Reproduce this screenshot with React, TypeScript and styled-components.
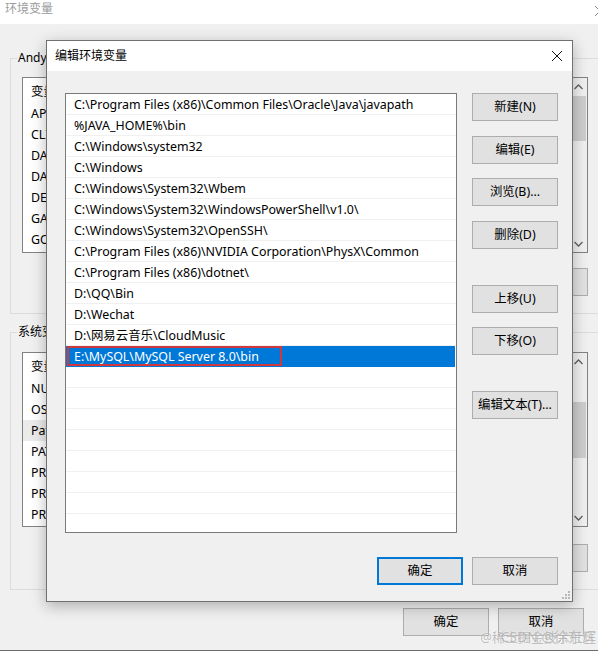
import React from "react";
import styled, { createGlobalStyle } from "styled-components";

const FONT = `"Noto Sans", "Noto Sans CJK SC", sans-serif`;

const Global = createGlobalStyle`
  html, body { margin: 0; padding: 0; width: 598px; height: 652px; overflow: hidden; background: #fff; }
  body { font-family: ${FONT}; font-size: 12px; color: #000; }
  * { box-sizing: border-box; }
`;

const Screen = styled.div`
  position: relative;
  width: 598px;
  height: 652px;
  overflow: hidden;
  background: #fff;
`;

/* ---------- background window: 环境变量 ---------- */
const Window = styled.div`
  width: 612px;
  height: 651px;
  background: #f0f0f0;
  border-bottom: 1px solid #6a6a6a;
  display: flex;
  flex-direction: column;
`;

const WinTitleBar = styled.div`
  height: 24px;
  flex: none;
  background: #fff;
  display: flex;
  justify-content: space-between;
  align-items: flex-start;
  padding: 1px 0 0 5px;
`;

const WinTitle = styled.span`
  color: #9c9c9c;
  font-size: 12px;
  line-height: 16px;
`;

const WinClose = styled.svg`
  margin: 5px 7px 0 0;
`;

const WinBody = styled.div`
  flex: 1;
  display: flex;
  flex-direction: column;
  padding: 26px 12px 0 10px;
`;

const GroupBox = styled.fieldset<{ $mt?: number }>`
  margin: ${(p) => p.$mt ?? 0}px 0 0 0;
  padding: 0 11px 17px 11px;
  border: 1px solid #dcdcdc;
  min-width: 0;
  display: flex;
  flex-direction: column;
`;

const GroupLegend = styled.legend`
  margin-left: -5px;
  padding: 0 1px;
  font-size: 12px;
  line-height: 16px;
  color: #000;
`;

const BgList = styled.div<{ $h: number; $mt: number }>`
  height: ${(p) => p.$h}px;
  margin-top: ${(p) => p.$mt}px;
  border: 1px solid #828282;
  background: #fff;
  display: flex;
  overflow: hidden;
`;

const BgTable = styled.div`
  flex: 1;
  display: flex;
  flex-direction: column;
  overflow: hidden;
`;

const BgHeader = styled.div`
  height: 25px;
  flex: none;
  display: flex;
  align-items: center;
  padding-left: 8px;
  font-size: 12.4px;
`;

const BgRow = styled.div<{ $sel?: boolean }>`
  height: 21px;
  flex: none;
  display: flex;
  align-items: center;
  padding-left: 8px;
  background: ${(p) => (p.$sel ? "#ebebeb" : "#fff")};
  white-space: nowrap;
  font-size: 12.4px;
`;

const Scrollbar = styled.div`
  width: 17px;
  flex: none;
  background: #f0f0f0;
  display: flex;
  flex-direction: column;
`;

const ScrollArrow = styled.div`
  height: 17px;
  flex: none;
  display: flex;
  align-items: center;
  justify-content: center;
`;

const ScrollTrack = styled.div`
  flex: 1;
  display: flex;
  flex-direction: column;
  align-items: center;
`;

const ScrollThumb = styled.div<{ $top: number; $h: number }>`
  width: 15px;
  margin-top: ${(p) => p.$top}px;
  height: ${(p) => p.$h}px;
  background: #cdcdcd;
`;

const BgButtonRow = styled.div<{ $mt: number }>`
  margin-top: ${(p) => p.$mt}px;
  display: flex;
  justify-content: flex-end;
  gap: 9px;
`;

const Footer = styled.div`
  margin-top: 18px;
  padding-right: 16px;
  display: flex;
  justify-content: flex-end;
  gap: 9px;
`;

const Btn = styled.button<{ $primary?: boolean; $mt?: number }>`
  width: 86px;
  height: 28px;
  flex: none;
  margin: ${(p) => p.$mt ?? 0}px 0 0 0;
  padding: 0;
  background: #e1e1e1;
  border: ${(p) => (p.$primary ? "2px solid #0078d7" : "1px solid #adadad")};
  font-family: ${FONT};
  font-size: 12.4px;
  color: #000;
  line-height: 16px;
`;

/* ---------- foreground dialog: 编辑环境变量 ---------- */
const Dialog = styled.div`
  position: absolute;
  left: 46px;
  top: 40px;
  width: 527px;
  height: 562px;
  border: 1px solid #707070;
  background: #f0f0f0;
  box-shadow: 0 4px 14px rgba(0, 0, 0, 0.28);
  display: flex;
  flex-direction: column;
`;

const DlgTitleBar = styled.div`
  height: 30px;
  flex: none;
  background: #fff;
  display: flex;
  align-items: center;
  justify-content: space-between;
  padding: 0 10px 0 8px;
`;

const DlgTitle = styled.span`
  font-size: 12px;
  line-height: 16px;
  color: #000;
`;

const DlgBody = styled.div`
  flex: 1;
  display: grid;
  grid-template-columns: 392px 86px;
  grid-template-rows: 440px 28px;
  column-gap: 15px;
  row-gap: 24px;
  padding: 22px 14px 16px 18px;
`;

const PathList = styled.div`
  border: 1px solid #7a7a7a;
  background: #fff;
  overflow: hidden;
  display: flex;
  flex-direction: column;
`;

const PathRow = styled.div<{ $sel?: boolean }>`
  height: 21px;
  flex: none;
  display: flex;
  align-items: center;
  padding: 1px 0 0 ${(p) => (p.$sel ? 1 : 8)}px;
  margin-right: ${(p) => (p.$sel ? 1 : 0)}px;
  border-bottom: 1px solid ${(p) => (p.$sel ? "#0078d7" : "#f0f0f0")};
  background: ${(p) => (p.$sel ? "#0078d7" : "#fff")};
  color: ${(p) => (p.$sel ? "#fff" : "#000")};
  white-space: nowrap;
  font-size: 12.4px;
  line-height: 16px;
`;

const RedMark = styled.span`
  display: inline-flex;
  align-items: center;
  height: 20px;
  margin-top: -1px;
  border: 2px solid #d3373e;
  padding: 1px 21px 0 5px;
`;

const SideButtons = styled.div`
  display: flex;
  flex-direction: column;
`;

const DlgFooter = styled.div`
  grid-column: 1 / span 2;
  display: flex;
  justify-content: flex-end;
  gap: 9px;
`;

const Grip = styled.svg`
  position: absolute;
  right: 2px;
  bottom: 2px;
`;

const Watermark = styled.div`
  position: absolute;
  right: 2px;
  bottom: 6px;
  width: 116px;
  height: 18px;
`;

const WmText = styled.span<{ $size: number }>`
  position: absolute;
  right: 0;
  bottom: 0;
  font-size: ${(p) => p.$size}px;
  line-height: 18px;
  white-space: nowrap;
  color: rgba(140, 140, 140, 0.55);
  text-shadow: 0 0 2px rgba(255, 255, 255, 0.8);
`;

const Chevron = ({ up }: { up?: boolean }) => (
  <svg width="9" height="6" viewBox="0 0 9 6">
    <path
      d={up ? "M0.5 5 L4.5 1 L8.5 5" : "M0.5 1 L4.5 5 L8.5 1"}
      fill="none"
      stroke="#606060"
      strokeWidth="1.3"
    />
  </svg>
);

const CloseX = ({ size, color }: { size: number; color: string }) => (
  <svg width={size} height={size} viewBox={`0 0 ${size} ${size}`}>
    <path d={`M0 0 L${size} ${size} M${size} 0 L0 ${size}`} stroke={color} strokeWidth="1" />
  </svg>
);

type BgVar = { name: string; sel?: boolean };

const userVars: BgVar[] = [
  { name: "APIFOX" },
  { name: "CLION" },
  { name: "DATAGRIP" },
  { name: "DATASPELL" },
  { name: "DEVECO" },
  { name: "GATEWAY" },
  { name: "GOLAND" },
];

const sysVars: BgVar[] = [
  { name: "NUMBER" },
  { name: "OS" },
  { name: "Path", sel: true },
  { name: "PATHEXT" },
  { name: "PROC" },
  { name: "PROC" },
  { name: "PROC" },
];

function VarList({ vars, h, mt, thumbTop, thumbH }: { vars: BgVar[]; h: number; mt: number; thumbTop: number; thumbH: number }) {
  return (
    <BgList $h={h} $mt={mt}>
      <BgTable>
        <BgHeader>变量</BgHeader>
        {vars.map((v, i) => (
          <BgRow key={i} $sel={v.sel}>
            {v.name}
          </BgRow>
        ))}
      </BgTable>
      <Scrollbar>
        <ScrollArrow>
          <Chevron up />
        </ScrollArrow>
        <ScrollTrack>
          <ScrollThumb $top={thumbTop} $h={thumbH} />
        </ScrollTrack>
        <ScrollArrow>
          <Chevron />
        </ScrollArrow>
      </Scrollbar>
    </BgList>
  );
}

const paths = [
  "C:\\Program Files (x86)\\Common Files\\Oracle\\Java\\javapath",
  "%JAVA_HOME%\\bin",
  "C:\\Windows\\system32",
  "C:\\Windows",
  "C:\\Windows\\System32\\Wbem",
  "C:\\Windows\\System32\\WindowsPowerShell\\v1.0\\",
  "C:\\Windows\\System32\\OpenSSH\\",
  "C:\\Program Files (x86)\\NVIDIA Corporation\\PhysX\\Common",
  "C:\\Program Files (x86)\\dotnet\\",
  "D:\\QQ\\Bin",
  "D:\\Wechat",
  "D:\\网易云音乐\\CloudMusic",
];
const selectedPath = "E:\\MySQL\\MySQL Server 8.0\\bin";

const sideButtons: { label: string; mt: number }[] = [
  { label: "新建(N)", mt: 0 },
  { label: "编辑(E)", mt: 15 },
  { label: "浏览(B)...", mt: 14 },
  { label: "删除(D)", mt: 15 },
  { label: "上移(U)", mt: 36 },
  { label: "下移(O)", mt: 14 },
  { label: "编辑文本(T)...", mt: 36 },
];

export default function App() {
  return (
    <Screen>
      <Global />
      <Window>
        <WinTitleBar>
          <WinTitle>环境变量</WinTitle>
          <WinClose width="10" height="10" viewBox="0 0 10 10">
            <path d="M0 0 L10 10 M10 0 L0 10" stroke="#8a8a8a" strokeWidth="1" />
          </WinClose>
        </WinTitleBar>
        <WinBody>
          <GroupBox>
            <GroupLegend>Andy</GroupLegend>
            <VarList vars={userVars} h={176} mt={11} thumbTop={1} thumbH={45} />
            <BgButtonRow $mt={15}>
              <Btn>删除(D)</Btn>
            </BgButtonRow>
          </GroupBox>
          <GroupBox $mt={10}>
            <GroupLegend>系统变量</GroupLegend>
            <VarList vars={sysVars} h={175} mt={12} thumbTop={32} thumbH={56} />
            <BgButtonRow $mt={17}>
              <Btn>删除(L)</Btn>
            </BgButtonRow>
          </GroupBox>
          <Footer>
            <Btn>确定</Btn>
            <Btn>取消</Btn>
          </Footer>
        </WinBody>
      </Window>

      <Dialog>
        <DlgTitleBar>
          <DlgTitle>编辑环境变量</DlgTitle>
          <CloseX size={10} color="#111" />
        </DlgTitleBar>
        <DlgBody>
          <PathList>
            {paths.map((p, i) => (
              <PathRow key={i}>{p}</PathRow>
            ))}
            <PathRow $sel>
              <RedMark>{selectedPath}</RedMark>
            </PathRow>
            {Array.from({ length: 8 }).map((_, i) => (
              <PathRow key={`e${i}`} />
            ))}
          </PathList>
          <SideButtons>
            {sideButtons.map((b) => (
              <Btn key={b.label} $mt={b.mt}>
                {b.label}
              </Btn>
            ))}
          </SideButtons>
          <DlgFooter>
            <Btn $primary>确定</Btn>
            <Btn>取消</Btn>
          </DlgFooter>
        </DlgBody>
        <Grip width="8" height="8" viewBox="0 0 8 8">
          <g fill="#b8b8b8">
            <rect x="6" y="0" width="2" height="2" />
            <rect x="3" y="3" width="2" height="2" />
            <rect x="6" y="3" width="2" height="2" />
            <rect x="0" y="6" width="2" height="2" />
            <rect x="3" y="6" width="2" height="2" />
            <rect x="6" y="6" width="2" height="2" />
          </g>
        </Grip>
      </Dialog>

      <Watermark>
        <WmText $size={13}>@稀土掘金技术社区</WmText>
        <WmText $size={14}>CSDN @徐东辉</WmText>
      </Watermark>
    </Screen>
  );
}
